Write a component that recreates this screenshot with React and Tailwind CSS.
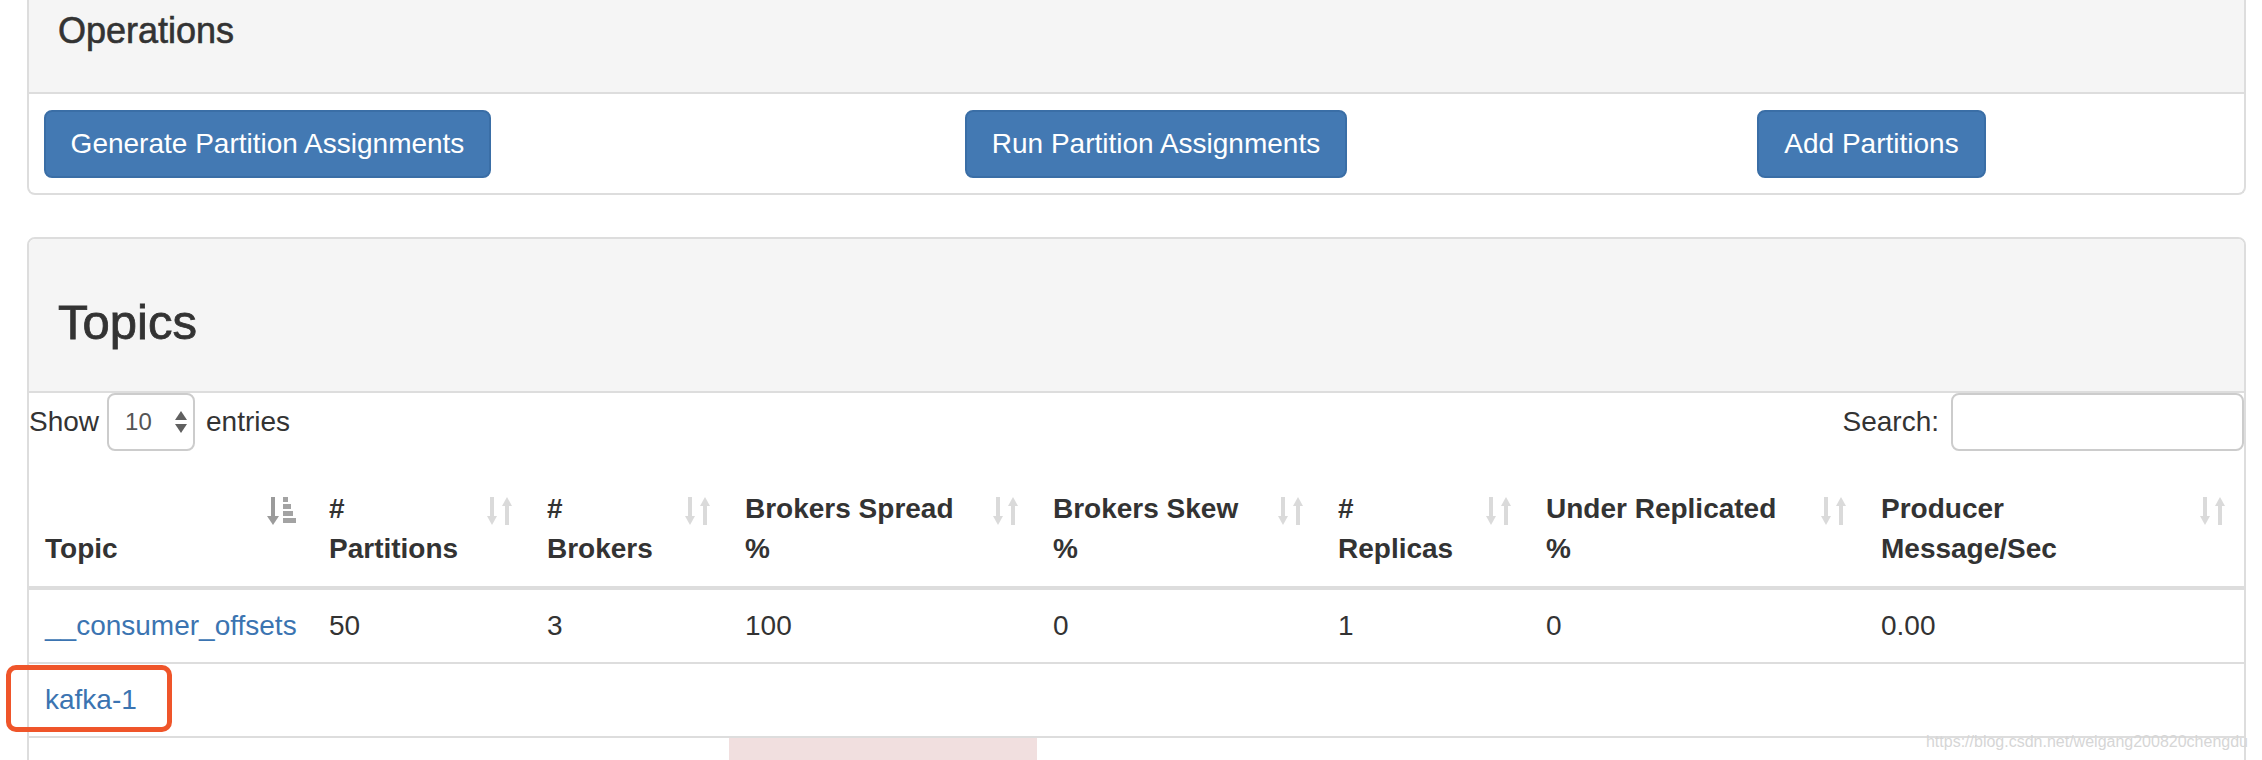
import React from 'react'

const columns = [
  { key: 'topic', width: 'w-[284px]', lines: ['Topic'], sorted: true },
  { key: 'partitions', width: 'w-[218px]', lines: ['#', 'Partitions'] },
  { key: 'brokers', width: 'w-[198px]', lines: ['#', 'Brokers'] },
  { key: 'spread', width: 'w-[308px]', lines: ['Brokers Spread', '%'] },
  { key: 'skew', width: 'w-[285px]', lines: ['Brokers Skew', '%'] },
  { key: 'replicas', width: 'w-[208px]', lines: ['#', 'Replicas'] },
  { key: 'under', width: 'w-[335px]', lines: ['Under Replicated', '%'] },
  { key: 'producer', width: 'w-[379px]', lines: ['Producer', 'Message/Sec'] },
]

const rows = [
  ['__consumer_offsets', '50', '3', '100', '0', '1', '0', '0.00'],
  ['kafka-1', '', '', '', '', '', '', ''],
]

function SortIcon() {
  return (
    <svg width="27" height="28" viewBox="0 0 27 28" className="shrink-0">
      <rect x="3" y="0" width="4" height="20" fill="#dadada" />
      <polygon points="0,19 10,19 5,28" fill="#dadada" />
      <polygon points="15,9 25,9 20,0" fill="#dadada" />
      <rect x="18" y="8" width="4" height="20" fill="#dadada" />
    </svg>
  )
}

function SortedIcon() {
  return (
    <svg width="29" height="28" viewBox="0 0 29 28" className="shrink-0">
      <rect x="4" y="0" width="4" height="20" fill="#9b9b9b" />
      <polygon points="0,19 12,19 6,28" fill="#9b9b9b" />
      <rect x="16" y="0" width="5" height="5" fill="#a3a3a3" />
      <rect x="16" y="7" width="8" height="5" fill="#a3a3a3" />
      <rect x="16" y="14" width="10" height="5" fill="#a3a3a3" />
      <rect x="16" y="21" width="13" height="5" fill="#a3a3a3" />
    </svg>
  )
}

function Btn({ children, className }) {
  return (
    <button
      className={`h-[68px] rounded-[8px] border-2 border-[#3a6ea6] bg-[#4379b3] text-white text-[28px] leading-[40px] flex items-center justify-center ${className}`}
    >
      {children}
    </button>
  )
}

export default function App() {
  return (
    <div className="relative min-h-screen bg-white text-[#333] font-['Liberation_Sans',Arial,sans-serif] overflow-hidden">
      <div className="pl-[27px] pr-[16px]">
        {/* Operations */}
        <div className="border-x-2 border-b-2 border-[#dddddd] rounded-b-[8px]">
          <div className="h-[94px] bg-[#f5f5f5] border-b-2 border-[#dddddd] pl-[29px] pt-[11px]">
            <h3 className="text-[36px] leading-[40px] [-webkit-text-stroke:0.6px_#333]">Operations</h3>
          </div>
          <div className="flex pt-[16px] pb-[15px] pl-[15px]">
            <Btn className="w-[447px]">Generate Partition Assignments</Btn>
            <Btn className="w-[382px] ml-[474px]">Run Partition Assignments</Btn>
            <Btn className="w-[229px] ml-[410px]">Add Partitions</Btn>
          </div>
        </div>

        {/* Topics */}
        <div className="mt-[42px] border-2 border-[#dddddd] rounded-t-[8px]">
          <div className="h-[154px] bg-[#f5f5f5] border-b-2 border-[#dddddd] rounded-t-[6px] pl-[29px] pt-[57px]">
            <h2 className="text-[49px] leading-[53px] [-webkit-text-stroke:0.8px_#333]">Topics</h2>
          </div>

          <div className="flex items-center justify-between h-[58px] text-[28px]">
            <div className="flex items-center">
              <span>Show</span>
              <div className="ml-[8px] mr-[11px] w-[88px] h-[58px] border-2 border-[#cccccc] rounded-[8px] flex items-center pl-[16px] pr-[6px] text-[24px] text-[#555]">
                <span>10</span>
                <svg width="12" height="24" viewBox="0 0 12 24" className="ml-auto">
                  <polygon points="0,10 12,10 6,1" fill="#606060" />
                  <polygon points="0,14 12,14 6,23" fill="#606060" />
                </svg>
              </div>
              <span>entries</span>
            </div>
            <div className="flex items-center">
              <span>Search:</span>
              <div className="ml-[12px] w-[293px] h-[58px] border-2 border-[#cccccc] rounded-[8px]" />
            </div>
          </div>

          <table className="mt-[22px] w-full table-fixed border-separate border-spacing-0 text-[28px] leading-[40px]">
            <thead>
              <tr>
                {columns.map((c) => (
                  <th
                    key={c.key}
                    className={`${c.width} text-left font-bold align-bottom pl-[16px] pr-[17px] pt-[16px] pb-[17px] border-b-4 border-[#dddddd]`}
                  >
                    <div className="flex h-[80px]">
                      <div className="self-end">
                        {c.lines.map((l, i) => (
                          <div key={i}>{l}</div>
                        ))}
                      </div>
                      <div className="ml-auto self-start mt-[8px]">
                        {c.sorted ? <SortedIcon /> : <SortIcon />}
                      </div>
                    </div>
                  </th>
                ))}
              </tr>
            </thead>
            <tbody>
              {rows.map((r, ri) => (
                <tr key={ri}>
                  {r.map((v, ci) => (
                    <td
                      key={ci}
                      className={`px-[16px] py-[16px] ${ri === 0 ? 'border-t-0' : 'border-t-2 border-[#dddddd]'}`}
                    >
                      {ci === 0 ? <a className="text-[#3b74b1]">{v}</a> : v}
                    </td>
                  ))}
                </tr>
              ))}
              <tr>
                {columns.map((c, ci) => (
                  <td
                    key={c.key}
                    className={`px-[16px] py-[16px] border-t-2 border-[#dddddd] ${ci === 3 ? 'bg-[#f1dfdf]' : ''}`}
                  >
                    &nbsp;
                  </td>
                ))}
              </tr>
            </tbody>
          </table>
        </div>
      </div>

      {/* annotation box */}
      <div className="absolute left-[6px] top-[665px] w-[166px] h-[67px] border-[5px] border-[#ef552a] rounded-[10px]" />

      {/* watermark */}
      <div className="absolute right-[14px] top-[733px] text-[16px] leading-[18px] text-[#d6d6d6]">
        https://blog.csdn.net/weigang200820chengdu
      </div>
    </div>
  )
}
